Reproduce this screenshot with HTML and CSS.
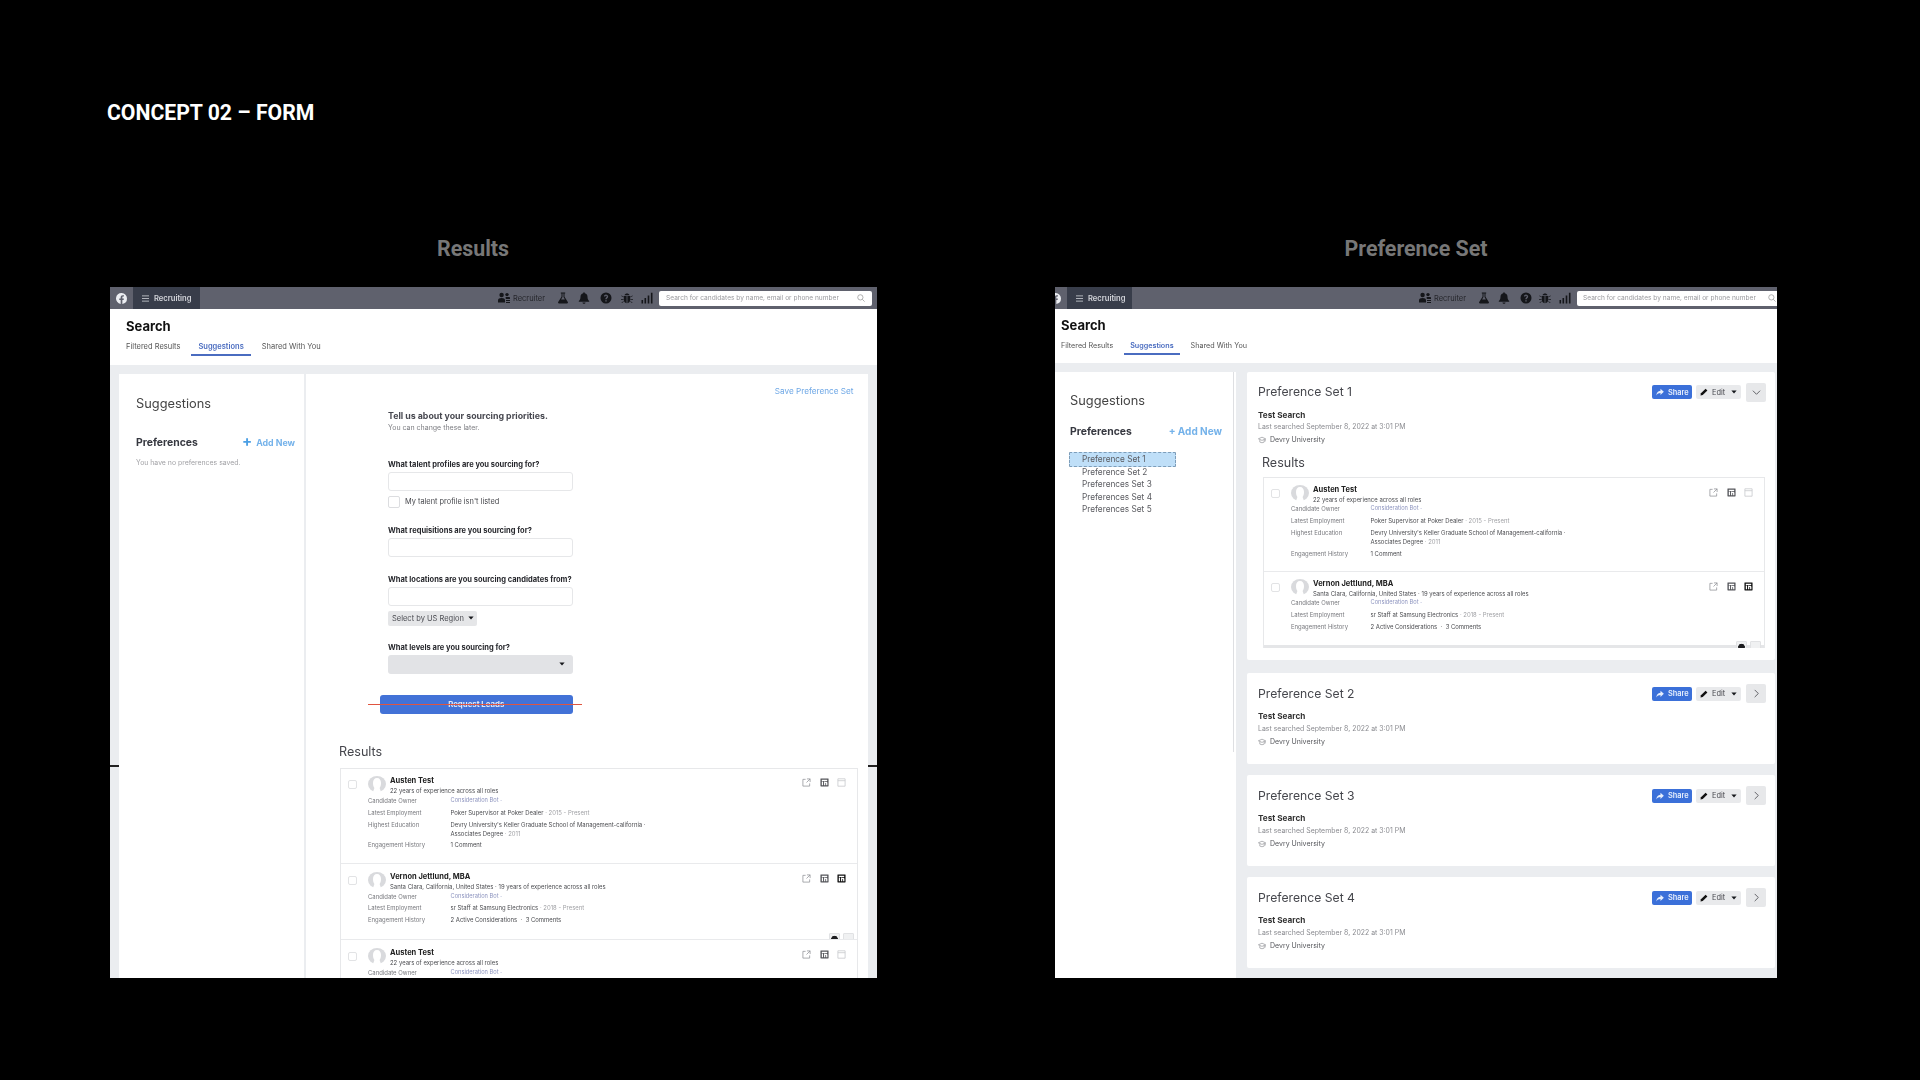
FILE: index.html
```html
<!DOCTYPE html>
<html lang="en">
<head>
<meta charset="utf-8">
<title>Concept 02 – Form</title>
<link rel="stylesheet" href="styles.css">
</head>
<body>
<svg class="sprite" aria-hidden="true">
  <symbol id="i-fb" viewBox="0 0 16 16"><path d="M16 8a8 8 0 1 0-9.25 7.9v-5.59H4.72V8h2.03V6.24c0-2 1.19-3.11 3.02-3.11.87 0 1.79.16 1.79.16v1.97h-1.01c-.99 0-1.3.62-1.3 1.25V8h2.22l-.36 2.31H9.25v5.59A8 8 0 0 0 16 8z"/></symbol>
  <symbol id="i-menu" viewBox="0 0 8 8"><path d="M0 1h8M0 4h8M0 7h8" stroke="currentColor" stroke-width=".9" fill="none"/></symbol>
  <symbol id="i-people" viewBox="0 0 12 12"><circle cx="3.6" cy="3" r="2.2"/><path d="M0 10.5V8.2C0 6.8 1.4 6 3.6 6s3.4.8 3.4 2.2v2.3z"/><circle cx="9" cy="2.6" r="1.7"/><path d="M7.6 5h3.2c.7 0 1.2.4 1.2 1v1H7.8z"/><path d="M8 8h4v1H8zM8 10h4v1H8z"/></symbol>
  <symbol id="i-flask" viewBox="0 0 12 12"><path d="M3.8.5h4.4v1H7.5v3.2l3.3 5.4c.4.7 0 1.4-.8 1.4H2c-.8 0-1.2-.7-.8-1.400l3.300-5.400V1.500H3.800zM5.500 1.500v3.600L4.100 7.500h3.800L6.500 5.100V1.500z"/></symbol>
  <symbol id="i-bell" viewBox="0 0 12 12"><path d="M6 .3c.5 0 .8.4.8.9 1.800.4 2.700 1.800 2.700 3.600 0 2.200.6 3.200 1.700 4.200v.7H.8V9c1.100-1 1.700-2 1.700-4.200 0-1.800.9-3.200 2.700-3.600 0-.5.300-.9.800-.9zM4.500 10.500h3c0 .8-.7 1.300-1.500 1.300s-1.500-.5-1.500-1.300z"/></symbol>
  <symbol id="i-help" viewBox="0 0 12 12"><path fill-rule="evenodd" d="M6 .5a5.500 5.500 0 1 1 0 11 5.500 5.500 0 0 1 0-11zM5.300 8.200v1.300h1.400V8.200zM4 4.600h1.300c0-.5.300-.8.700-.8.500 0 .8.300.8.700 0 .8-1.500 1-1.500 2.800h1.400c0-1.200 1.500-1.400 1.500-2.900C7.700 3.300 7 2.600 6 2.600c-1.200 0-2 .8-2 2z"/></symbol>
  <symbol id="i-bug" viewBox="0 0 12 12"><path d="M3.500 3.200C3.800 2 4.800 1.400 6 1.400s2.200.6 2.500 1.800zM2.800 4h2.800v7.200C3.800 11 2.800 9.600 2.800 7.800zM6.400 4h2.800v3.800c0 1.800-1 3.200-2.800 3.400zM.5 3.500l2.200 1.200-.3.600L.2 4.100zM11.500 3.500l.3.600-2.200 1.200-.3-.6zM0 7h2.500v.8H0zM9.500 7H12v.8H9.500zM2.400 9.200l.4.600-1.900 1.300-.4-.6zM9.600 9.200l1.900 1.300-.4.600-1.900-1.300z"/></symbol>
  <symbol id="i-bars" viewBox="0 0 12 12"><path d="M.5 8h1.600v3.500H.5zM3.500 6h1.600v5.500H3.500zM6.700 3.500h1.600v8H6.700zM9.900.8h1.600v10.700H9.900z"/></symbol>
  <symbol id="i-search" viewBox="0 0 10 10"><circle cx="4.200" cy="4.200" r="3.300" fill="none" stroke="currentColor" stroke-width=".8"/><path d="M6.700 6.700L9.500 9.500" stroke="currentColor" stroke-width=".8" fill="none"/></symbol>
  <symbol id="i-share" viewBox="0 0 10 10"><path d="M5.600.8L9.800 4.800 5.600 8.800V6.300C3.400 6.300 1.700 7.200.4 9.300c.2-3.300 1.800-5.800 5.200-6z"/></symbol>
  <symbol id="i-pencil" viewBox="0 0 10 10"><path d="M7 .8L9.200 3 3.400 8.800.6 9.400 1.200 6.600z"/></symbol>
  <symbol id="i-caret" viewBox="0 0 8 5"><path d="M.5.5h7L4 4.500z"/></symbol>
  <symbol id="i-down" viewBox="0 0 10 10"><path d="M1 3l4 4 4-4" fill="none" stroke="currentColor" stroke-width=".9"/></symbol>
  <symbol id="i-right" viewBox="0 0 10 10"><path d="M3 1l4 4-4 4" fill="none" stroke="currentColor" stroke-width=".9"/></symbol>
  <symbol id="i-cap" viewBox="0 0 10 10"><path d="M.5 3.500L5 1.500l4.500 2L5 5.500zM2.300 4.800v2.800c1.600 1 3.800 1 5.400 0V4.800M9 3.800v3" fill="none" stroke="currentColor" stroke-width=".8"/></symbol>
  <symbol id="i-open" viewBox="0 0 10 10"><path d="M4 1.500H1v7.500h7.500V6M5.500 1h3.500v3.500M9 1L5 5" fill="none" stroke="currentColor" stroke-width=".8"/></symbol>
  <symbol id="i-save" viewBox="0 0 10 10"><path fill-rule="evenodd" d="M1 .5h8c.3 0 .5.2.5.5v8c0 .3-.2.5-.5.5H1c-.3 0-.5-.2-.5-.5V1c0-.3.2-.5.5-.5zM2 4v4h1.400V4zM4.500 4v4h1.400V6c0-.6.900-.6.900 0v2h1.400V5.500C8.200 4 6.500 3.800 5.900 4.700V4zM2 2v1.200h6V2z"/></symbol>
  <symbol id="i-box" viewBox="0 0 10 10"><path d="M1 .9h8v8.200H1zM1 3h8" fill="none" stroke="currentColor" stroke-width=".9"/></symbol>
  <symbol id="i-avatar" viewBox="0 0 18 16"><ellipse cx="9" cy="8" rx="9" ry="8" fill="#d9dadd"/><path d="M9 2c2.700 0 4 2 4 5 0 2.300-.6 4-1.400 5l1.400 4H5l1.400-4C5.600 11 5 9.300 5 7c0-3 1.300-5 4-5z" fill="#fff"/></symbol>
</svg>

<main class="page">
  <h1 class="concept-title">CONCEPT 02 – FORM</h1>
  <div class="stage">

    <section class="column column--results">
      <h2 class="column-label">Results</h2>
      <div class="frame frame--results">
        <nav class="topbar">
          <span class="fb-cell"><svg class="fb-logo"><use href="#i-fb"/></svg></span>
          <span class="app-switch"><svg class="menu-icon"><use href="#i-menu"/></svg>Recruiting</span>
          <div class="top-tools">
            <svg class="tool"><use href="#i-people"/></svg><span class="role">Recruiter</span>
            <svg class="tool tool--flask"><use href="#i-flask"/></svg>
            <svg class="tool tool--bell"><use href="#i-bell"/></svg>
            <svg class="tool tool--help"><use href="#i-help"/></svg>
            <svg class="tool tool--bug"><use href="#i-bug"/></svg>
            <svg class="tool tool--bars"><use href="#i-bars"/></svg>
            <div class="topsearch"><span class="placeholder">Search for candidates by name, email or phone number</span><svg class="search-icon"><use href="#i-search"/></svg></div>
          </div>
        </nav>
        <header class="page-head">
          <div class="page-title">Search</div>
          <div class="tabs">
            <span class="tab">Filtered Results</span>
            <span class="tab tab--active">Suggestions</span>
            <span class="tab">Shared With You</span>
          </div>
        </header>
        <div class="workspace">
          <aside class="sidebar">
            <div class="side-title">Suggestions</div>
            <div class="pref-head">
              <span class="pref-title">Preferences</span>
              <span class="add-new"><span class="plus">+</span>Add New</span>
            </div>
            <p class="no-prefs">You have no preferences saved.</p>
          </aside>
          <div class="form-panel">
            <div class="save-set">Save Preference Set</div>
            <form class="lead-form">
              <div class="form-title">Tell us about your sourcing priorities.</div>
              <div class="form-sub">You can change these later.</div>
              <div class="field-label field-label--first">What talent profiles are you sourcing for?</div>
              <div class="text-input"></div>
              <div class="check-row"><span class="big-check"></span>My talent profile isn't listed</div>
              <div class="field-label">What requisitions are you sourcing for?</div>
              <div class="text-input"></div>
              <div class="field-label">What locations are you sourcing candidates from?</div>
              <div class="text-input"></div>
              <div class="region-pill">Select by US Region<svg class="caret"><use href="#i-caret"/></svg></div>
              <div class="field-label field-label--levels">What levels are you sourcing for?</div>
              <div class="level-select"><svg class="caret"><use href="#i-caret"/></svg></div>
              <div class="request-btn">Request Leads<span class="redline"></span></div>
            </form>
            <h3 class="results-title">Results</h3>
            <div class="result-list">
              <article class="result">
                <span class="row-check"></span>
                <div class="result-body">
                  <div class="person"><svg class="avatar"><use href="#i-avatar"/></svg><div><div class="person-name">Austen Test</div><div class="person-sub">22 years of experience across all roles</div></div></div>
                  <dl class="facts">
                    <dt>Candidate Owner</dt><dd class="owner">Consideration Bot ·</dd>
                    <dt>Latest Employment</dt><dd>Poker Supervisor at Poker Dealer <i>· 2015 - Present</i></dd>
                    <dt>Highest Education</dt><dd>Devry University's Keller Graduate School of Management-california ·<br>Associates Degree <i>· 2011</i></dd>
                    <dt>Engagement History</dt><dd>1 Comment</dd>
                  </dl>
                </div>
                <div class="row-icons"><svg class="ri"><use href="#i-open"/></svg><svg class="ri ri--dark"><use href="#i-save"/></svg><svg class="ri ri--pale"><use href="#i-box"/></svg></div>
              </article>
              <article class="result result--second">
                <span class="row-check"></span>
                <div class="result-body">
                  <div class="person"><svg class="avatar"><use href="#i-avatar"/></svg><div><div class="person-name">Vernon Jettlund, MBA</div><div class="person-sub">Santa Clara, California, United States · 19 years of experience across all roles</div></div></div>
                  <dl class="facts">
                    <dt>Candidate Owner</dt><dd class="owner">Consideration Bot ·</dd>
                    <dt>Latest Employment</dt><dd>sr Staff at Samsung Electronics <i>· 2018 - Present</i></dd>
                    <dt>Engagement History</dt><dd>2 Active Considerations &nbsp;·&nbsp; 3 Comments</dd>
                  </dl>
                </div>
                <div class="row-icons"><svg class="ri"><use href="#i-open"/></svg><svg class="ri ri--dark"><use href="#i-save"/></svg><svg class="ri ri--black"><use href="#i-save"/></svg></div>
                <div class="float-tools"><span class="float-btn float-btn--dark"></span><span class="float-btn"></span></div>
              </article>
              <article class="result result--third">
                <span class="row-check"></span>
                <div class="result-body">
                  <div class="person"><svg class="avatar"><use href="#i-avatar"/></svg><div><div class="person-name">Austen Test</div><div class="person-sub">22 years of experience across all roles</div></div></div>
                  <dl class="facts"><dt>Candidate Owner</dt><dd class="owner">Consideration Bot ·</dd></dl>
                </div>
                <div class="row-icons"><svg class="ri"><use href="#i-open"/></svg><svg class="ri ri--dark"><use href="#i-save"/></svg><svg class="ri ri--pale"><use href="#i-box"/></svg></div>
              </article>
            </div>
          </div>
        </div>
        <span class="edge-mark edge-mark--left"></span>
        <span class="edge-mark edge-mark--right"></span>
      </div>
    </section>

    <section class="column column--prefs">
      <h2 class="column-label">Preference Set</h2>
      <div class="frame frame--prefs">
        <nav class="topbar">
          <span class="fb-cell"><svg class="fb-logo"><use href="#i-fb"/></svg></span>
          <span class="app-switch"><svg class="menu-icon"><use href="#i-menu"/></svg>Recruiting</span>
          <div class="top-tools">
            <svg class="tool"><use href="#i-people"/></svg><span class="role">Recruiter</span>
            <svg class="tool tool--flask"><use href="#i-flask"/></svg>
            <svg class="tool tool--bell"><use href="#i-bell"/></svg>
            <svg class="tool tool--help"><use href="#i-help"/></svg>
            <svg class="tool tool--bug"><use href="#i-bug"/></svg>
            <svg class="tool tool--bars"><use href="#i-bars"/></svg>
            <div class="topsearch"><span class="placeholder">Search for candidates by name, email or phone number</span><svg class="search-icon"><use href="#i-search"/></svg></div>
          </div>
        </nav>
        <header class="page-head">
          <div class="page-title">Search</div>
          <div class="tabs">
            <span class="tab">Filtered Results</span>
            <span class="tab tab--active">Suggestions</span>
            <span class="tab">Shared With You</span>
          </div>
        </header>
        <div class="workspace">
          <aside class="sidebar">
            <div class="side-title">Suggestions</div>
            <div class="pref-head">
              <span class="pref-title">Preferences</span>
              <span class="add-new">+ Add New</span>
            </div>
            <ul class="pref-list">
              <li class="pref-item pref-item--selected">Preference Set 1</li>
              <li class="pref-item">Preference Set 2</li>
              <li class="pref-item">Preferences Set 3</li>
              <li class="pref-item">Preferences Set 4</li>
              <li class="pref-item">Preferences Set 5</li>
            </ul>
          </aside>
          <div class="card-stack">
            <article class="set-card set-card--open">
              <div class="set-head">
                <h3 class="set-title">Preference Set 1</h3>
                <div class="set-actions">
                  <span class="btn-share"><svg class="btn-icon"><use href="#i-share"/></svg>Share</span>
                  <span class="btn-edit"><svg class="btn-icon"><use href="#i-pencil"/></svg>Edit<svg class="caret"><use href="#i-caret"/></svg></span>
                  <span class="btn-toggle"><svg class="chev"><use href="#i-down"/></svg></span>
                </div>
              </div>
              <div class="search-name">Test Search</div>
              <div class="search-date">Last searched September 8, 2022 at 3:01 PM</div>
              <div class="search-school"><svg class="cap"><use href="#i-cap"/></svg>Devry University</div>
              <h3 class="results-title">Results</h3>
              <div class="result-list">
                <article class="result">
                  <span class="row-check"></span>
                  <div class="result-body">
                    <div class="person"><svg class="avatar"><use href="#i-avatar"/></svg><div><div class="person-name">Austen Test</div><div class="person-sub">22 years of experience across all roles</div></div></div>
                    <dl class="facts">
                      <dt>Candidate Owner</dt><dd class="owner">Consideration Bot ·</dd>
                      <dt>Latest Employment</dt><dd>Poker Supervisor at Poker Dealer <i>· 2015 - Present</i></dd>
                      <dt>Highest Education</dt><dd>Devry University's Keller Graduate School of Management-california ·<br>Associates Degree <i>· 2011</i></dd>
                      <dt>Engagement History</dt><dd>1 Comment</dd>
                    </dl>
                  </div>
                  <div class="row-icons"><svg class="ri"><use href="#i-open"/></svg><svg class="ri ri--dark"><use href="#i-save"/></svg><svg class="ri ri--pale"><use href="#i-box"/></svg></div>
                </article>
                <article class="result result--second">
                  <span class="row-check"></span>
                  <div class="result-body">
                    <div class="person"><svg class="avatar"><use href="#i-avatar"/></svg><div><div class="person-name">Vernon Jettlund, MBA</div><div class="person-sub">Santa Clara, California, United States · 19 years of experience across all roles</div></div></div>
                    <dl class="facts">
                      <dt>Candidate Owner</dt><dd class="owner">Consideration Bot ·</dd>
                      <dt>Latest Employment</dt><dd>sr Staff at Samsung Electronics <i>· 2018 - Present</i></dd>
                      <dt>Engagement History</dt><dd>2 Active Considerations &nbsp;·&nbsp; 3 Comments</dd>
                    </dl>
                  </div>
                  <div class="row-icons"><svg class="ri"><use href="#i-open"/></svg><svg class="ri ri--dark"><use href="#i-save"/></svg><svg class="ri ri--black"><use href="#i-save"/></svg></div>
                  <div class="float-tools"><span class="float-btn float-btn--dark"></span><span class="float-btn"></span></div>
                </article>
              </div>
            </article>

            <article class="set-card">
              <div class="set-head">
                <h3 class="set-title">Preference Set 2</h3>
                <div class="set-actions">
                  <span class="btn-share"><svg class="btn-icon"><use href="#i-share"/></svg>Share</span>
                  <span class="btn-edit"><svg class="btn-icon"><use href="#i-pencil"/></svg>Edit<svg class="caret"><use href="#i-caret"/></svg></span>
                  <span class="btn-toggle"><svg class="chev"><use href="#i-right"/></svg></span>
                </div>
              </div>
              <div class="search-name">Test Search</div>
              <div class="search-date">Last searched September 8, 2022 at 3:01 PM</div>
              <div class="search-school"><svg class="cap"><use href="#i-cap"/></svg>Devry University</div>
            </article>

            <article class="set-card">
              <div class="set-head">
                <h3 class="set-title">Preference Set 3</h3>
                <div class="set-actions">
                  <span class="btn-share"><svg class="btn-icon"><use href="#i-share"/></svg>Share</span>
                  <span class="btn-edit"><svg class="btn-icon"><use href="#i-pencil"/></svg>Edit<svg class="caret"><use href="#i-caret"/></svg></span>
                  <span class="btn-toggle"><svg class="chev"><use href="#i-right"/></svg></span>
                </div>
              </div>
              <div class="search-name">Test Search</div>
              <div class="search-date">Last searched September 8, 2022 at 3:01 PM</div>
              <div class="search-school"><svg class="cap"><use href="#i-cap"/></svg>Devry University</div>
            </article>

            <article class="set-card">
              <div class="set-head">
                <h3 class="set-title">Preference Set 4</h3>
                <div class="set-actions">
                  <span class="btn-share"><svg class="btn-icon"><use href="#i-share"/></svg>Share</span>
                  <span class="btn-edit"><svg class="btn-icon"><use href="#i-pencil"/></svg>Edit<svg class="caret"><use href="#i-caret"/></svg></span>
                  <span class="btn-toggle"><svg class="chev"><use href="#i-right"/></svg></span>
                </div>
              </div>
              <div class="search-name">Test Search</div>
              <div class="search-date">Last searched September 8, 2022 at 3:01 PM</div>
              <div class="search-school"><svg class="cap"><use href="#i-cap"/></svg>Devry University</div>
            </article>
          </div>
        </div>
      </div>
    </section>

  </div>
</main>
</body>
</html>
```

FILE: styles.css
```css
* { box-sizing: border-box; }
html, body { margin: 0; padding: 0; background: #000; }
body { font-family: "Inter", "Liberation Sans", sans-serif; color: #333; }
.sprite { display: none; }
svg { display: block; flex: none; fill: currentColor; }

.page { width: 1920px; height: 1080px; overflow: hidden; background: #000; }
.concept-title { margin: 0; padding: 100px 0 0 107px; font: 700 21.2px/26px "Roboto", sans-serif; color: #fff; }

.stage { display: flex; gap: 178px; padding-left: 110px; margin-top: 110px; }
.column { display: flex; flex-direction: column; flex: none; }
.column--results { width: 767px; }
.column--prefs { width: 722px; }
.column-label { margin: 0 0 25px; height: 26px; font: 700 21.4px/26px "Roboto", sans-serif; color: #777; text-align: center; }
.column--results .column-label { padding-right: 41px; }

.frame { position: relative; height: 691px; overflow: hidden; background: #ebedf0; filter: blur(.45px); }

/* top bar */
.topbar { display: flex; align-items: center; height: 22px; background: #5f616d; }
.fb-cell { display: flex; align-items: center; justify-content: center; width: 23px; height: 100%; }
.fb-logo { width: 11px; height: 11px; color: #eceef2; }
.frame--prefs .fb-cell { width: 12px; justify-content: flex-start; }
.frame--prefs .fb-logo { margin-left: -5px; }
.app-switch { display: flex; align-items: center; width: 67px; height: 100%; padding-left: 9px; background: #383d4a; color: #d3d5da; font-size: 7.6px; font-weight: 600; }
.frame--prefs .app-switch { width: 65px; padding-left: 9px; }
.menu-icon { width: 7px; height: 7px; margin-right: 5px; }
.top-tools { display: flex; align-items: center; margin-left: auto; padding-right: 5px; color: #15161a; }
.frame--prefs .top-tools { padding-right: 0; }
.tool { width: 12px; height: 12px; }
.role { margin-left: 3px; font-size: 7.5px; color: #25262b; }
.tool--flask { margin-left: 12px; }
.tool--bell { margin-left: 9px; }
.tool--help { margin-left: 10px; }
.tool--bug { margin-left: 9px; }
.tool--bars { margin-left: 8px; }
.frame--prefs .tool--flask { margin-left: 12px; }
.frame--prefs .tool--bell { margin-left: 8px; }
.frame--prefs .tool--help { margin-left: 10px; }
.frame--prefs .tool--bug { margin-left: 7px; }
.topsearch { display: flex; align-items: center; width: 213px; height: 15px; margin-left: 6px; padding: 0 7px; background: #fff; border-radius: 2px; color: #9a9a9e; font-size: 6.6px; }
.frame--prefs .topsearch { width: 200px; padding: 0 1px 0 6px; border-radius: 2px 0 0 2px; }
.placeholder { white-space: nowrap; }
.search-icon { width: 8px; height: 8px; margin-left: auto; color: #888; }

/* page head */
.page-head { height: 56px; background: #fff; padding: 9px 16px 0; }
.frame--prefs .page-head { height: 54px; padding: 7.5px 6px 0; }
.page-title { font-size: 13px; font-weight: 700; line-height: 16px; color: #111; }
.tabs { display: flex; margin: 8px 0 0 -1px; font-size: 7.5px; line-height: 10px; color: #555; }
.tab { padding: 0 0 2px; margin-right: 11px; border-bottom: 2px solid transparent; white-space: nowrap; }
.tab:first-child { padding-left: 1px; }
.tab--active { padding: 0 7px 2px; color: #4a6cc0; font-weight: 600; border-bottom-color: #4a6cc0; }
.frame--prefs .tab { margin-right: 11px; font-size: 7.2px; }
.frame--prefs .tab--active { padding: 0 6px 2px; }

/* workspace */
.workspace { display: flex; margin-top: 9px; height: 626px; }
.frame--results .workspace { padding-left: 9px; gap: 2px; }

.sidebar { position: relative; flex: none; background: #fff; }
.frame--results .sidebar { width: 185px; padding: 22px 9px 0 17px; }
.frame--prefs .sidebar { width: 181px; padding: 21px 14px 0 15px; }
.frame--prefs .sidebar::after { content: ""; position: absolute; top: 0; right: 2px; width: 1px; height: 380px; background: #dedfe2; }
.side-title { font-size: 12.8px; line-height: 16px; color: #444; }
.pref-head { display: flex; justify-content: space-between; align-items: center; height: 14px; margin-top: 23px; }
.frame--prefs .pref-head { margin-top: 15px; }
.pref-title { font-size: 10.4px; font-weight: 700; color: #363840; }
.add-new { display: flex; align-items: center; font-size: 8.8px; font-weight: 700; color: #74b2ea; white-space: pre; }
.frame--prefs .add-new { font-size: 10px; }
.plus { font-size: 15px; line-height: 12px; margin: -3px 4px 0 0; color: #4b9fe4; }
.no-prefs { margin: 9px 0 0; font-size: 6.9px; line-height: 10px; color: #a2a2a6; }

.pref-list { list-style: none; margin: 14px 0 0; padding: 0; font-size: 8.25px; color: #5a5b60; }
.pref-item { height: 12.4px; line-height: 12.4px; padding-left: 12px; }
.pref-item--selected { width: 107px; height: 15px; margin: 0 0 -1px -1px; padding-left: 12px; line-height: 13px; background: #bfdff8; border: 1.5px dashed #7d9db9; border-radius: 1px; }

/* form */
.form-panel { flex: none; width: 562px; padding: 10px 0 0; background: #fff; }
.save-set { height: 14px; padding-right: 14.5px; text-align: right; font-size: 8.2px; line-height: 14px; color: #6fa8e6; }
.lead-form { width: 267px; margin: 11.5px 0 0 73.5px; padding-left: 8.5px; }
.form-title { font-size: 8.8px; font-weight: 700; line-height: 12px; color: #474850; }
.form-sub { margin-top: 1px; font-size: 7px; line-height: 10px; color: #7d7e83; }
.field-label { margin-top: 18px; font-size: 7.5px; font-weight: 700; line-height: 10px; color: #26272c; white-space: nowrap; }
.field-label--first { margin-top: 27px; }
.text-input { width: 185px; height: 19px; margin-top: 2px; background: #fff; border: 1px solid #e6e7e9; border-radius: 3px; }
.check-row { display: flex; align-items: center; height: 12px; margin-top: 5px; font-size: 7.4px; color: #48494e; }
.big-check { width: 12px; height: 12px; margin-right: 5px; background: #fff; border: 1px solid #dcdde0; border-radius: 2px; }
.region-pill { display: flex; align-items: center; width: 89px; height: 15px; margin-top: 5px; padding-left: 4px; background: #e5e6e8; border-radius: 2px; font-size: 7.5px; color: #4b4c52; }
.field-label.field-label--levels { margin-top: 17px; }
.caret { width: 6px; height: 4px; color: #17181c; }
.region-pill .caret { margin-left: 4px; }
.level-select { display: flex; align-items: center; justify-content: flex-end; width: 185px; height: 19px; margin-top: 2px; padding-right: 8px; background: #e2e3e6; border-radius: 3px; }
.request-btn { position: relative; width: 193.5px; height: 19px; margin: 21px 0 0 -8.5px; background: #4272d7; border-radius: 3px; font-size: 7.8px; font-weight: 700; line-height: 19px; text-align: center; color: #dfe7f7; }
.redline { position: absolute; left: -12px; top: 9px; width: 214px; height: 1.5px; background: #e0553f; }

.results-title { margin: 0; font-size: 12.6px; font-weight: 400; line-height: 16px; color: #45464c; }
.form-panel .results-title { margin: 30.5px 0 0 33px; }
.form-panel .result-list { margin: 7.5px 0 0 34px; width: 518px; height: 221px; }

/* result list */
.result-list { overflow: hidden; background: #fff; border: 1px solid #e7e8ea; border-bottom: 0; }
.result { position: relative; display: flex; overflow: hidden; padding: 6px 0 0; border-bottom: 1px solid #e9eaec; }
.result:first-child { height: 94px; }
.form-panel .result { padding-top: 6.5px; }
.form-panel .result:first-child { height: 95.5px; }
.result--second { height: 76px; }
.result--third { height: 60px; border-bottom: 0; }
.row-check { flex: none; width: 9px; height: 9px; margin: 5px 11px 0 7px; border: 1px solid #e2e3e5; border-radius: 2px; }
.result-body { flex: 1; min-width: 0; }
.person { display: flex; gap: 4px; }
.avatar { width: 18px; height: 16px; margin-top: 1px; }
.person-name { font-size: 7.5px; font-weight: 700; line-height: 11px; color: #222; white-space: nowrap; }
.person-sub { font-size: 5.95px; line-height: 10px; color: #4b4c50; white-space: nowrap; }
.facts { display: grid; grid-template-columns: 82.5px 1fr; row-gap: 3px; margin: -1px 0 0; font-size: 5.95px; line-height: 9px; color: #4b4c50; }
.form-panel .facts { row-gap: 2.8px; margin-top: 0; }
.frame--prefs .facts { grid-template-columns: 79.5px 1fr; }
.facts dt { color: #77787d; }
.facts dd { margin: 0; white-space: nowrap; }
.facts i { font-style: normal; color: #a0a1a5; }
.facts .owner { color: #8d94bf; font-size: 5.7px; margin-top: -1px; }
.row-icons { position: absolute; top: 9.5px; right: 11px; display: flex; gap: 8.5px; }
.ri { width: 9px; height: 9px; color: #8c8d92; }
.ri--dark { color: #54555a; }
.ri--pale { color: #c9cacd; }
.ri--black { color: #111; }
.float-tools { position: absolute; top: 69px; right: 3px; display: flex; gap: 3px; }
.float-btn { width: 11px; height: 11px; background: #f0f1f2; border: 1px solid #e1e2e4; border-radius: 1px; }
.float-btn--dark { background: radial-gradient(circle at 50% 55%, #1d1d20 0 3px, #f0f1f2 3.5px); }

/* preference cards */
.card-stack { display: flex; flex-direction: column; gap: 11px; flex: none; width: 528px; margin-left: 11px; }
.set-card { height: 91px; padding: 11.5px 9px 0 11px; background: #fff; border-radius: 2px; }
.set-card--open { height: 288px; padding-top: 11px; margin-bottom: 2px; }
.set-head { display: flex; justify-content: space-between; align-items: center; height: 18px; }
.set-title { margin: 0; font-size: 12.2px; font-weight: 400; line-height: 18px; color: #45464c; }
.set-actions { display: flex; align-items: center; gap: 4px; }
.btn-share, .btn-edit { display: flex; align-items: center; height: 14px; border-radius: 2px; font-size: 7.4px; }
.btn-share { width: 40px; padding-left: 4px; background: #3b70d9; color: #e6eefc; font-weight: 600; }
.btn-edit { width: 45px; padding-left: 4px; background: #e9eaec; color: #47484e; }
.btn-icon { width: 8px; height: 8px; margin-right: 4px; }
.btn-edit .btn-icon { color: #111; }
.btn-edit .caret { margin-left: 6px; }
.btn-toggle { display: flex; align-items: center; justify-content: center; width: 20px; height: 19px; margin-left: 1px; background: #e7e8ea; border-radius: 2px; color: #44454a; }
.chev { width: 9px; height: 9px; }
.search-name { margin-top: 8.5px; font-size: 8.2px; font-weight: 700; line-height: 11px; color: #333; }
.search-date { margin-top: 1.5px; font-size: 6.95px; line-height: 10px; color: #8b8c91; white-space: nowrap; }
.search-school { display: flex; align-items: center; margin-top: 3px; font-size: 7px; line-height: 10px; color: #55565b; }
.cap { width: 8px; height: 8px; margin-right: 4px; color: #8b8c91; }
.set-card .results-title { margin: 10px 0 0 4px; font-size: 12.5px; }
.set-card .result-list { width: 502px; height: 171px; margin: 6px 0 0 5px; background: linear-gradient(#fff 0 167px, #e5e6e8 167px); }
.set-card .result--second { height: 76px; border-bottom: 0; }

/* stray marks captured from the source comp */
.edge-mark { position: absolute; top: 478px; width: 9px; height: 1.5px; background: #222; }
.edge-mark--left { left: 0; }
.edge-mark--right { right: 0; }
```
